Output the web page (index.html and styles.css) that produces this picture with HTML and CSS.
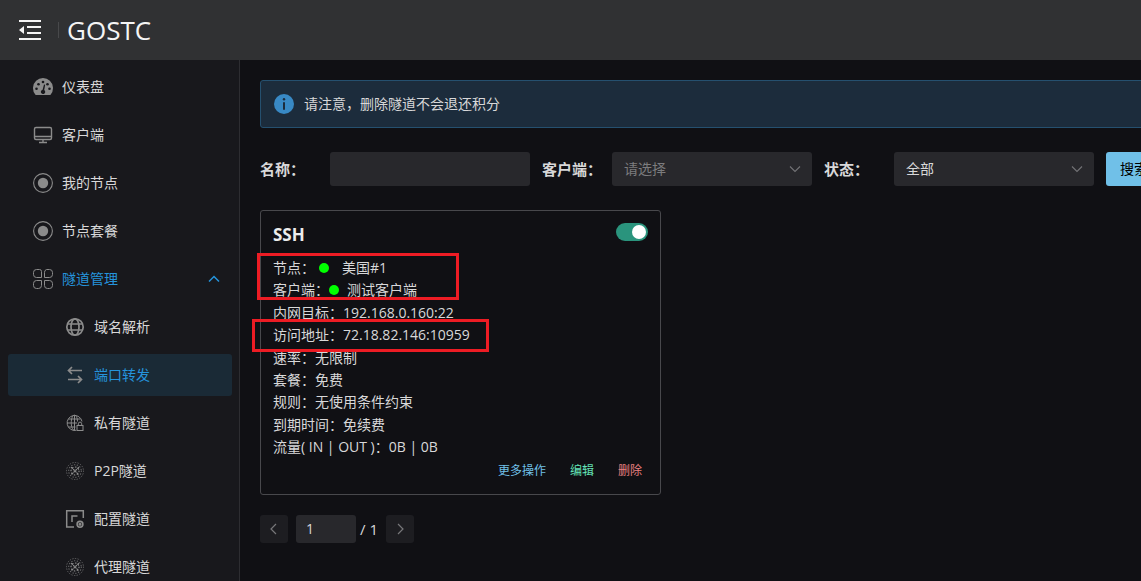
FILE: index.html
```html
<!DOCTYPE html>
<html lang="zh-CN">
<head>
<meta charset="utf-8">
<title>GOSTC</title>
<link rel="stylesheet" href="styles.css">
</head>
<body>
<svg class="defs" aria-hidden="true">
  <defs>
    <symbol id="node" viewBox="0 0 22 22"><circle cx="11" cy="11" r="9.4" fill="none" stroke="currentColor" stroke-width="1.1"/><circle cx="11" cy="11" r="5.2" fill="currentColor"/></symbol>
    <symbol id="mesh" viewBox="0 0 22 22">
      <g fill="none" stroke="currentColor" stroke-linecap="round">
        <circle cx="11" cy="11" r="8.5" stroke-width="1" stroke-dasharray="0.6 2.07" opacity=".6"/>
        <circle cx="11" cy="11" r="6.3" stroke-width="1.1" stroke-dasharray="0.5 2.33" opacity=".7"/>
        <circle cx="11" cy="11" r="4" stroke-width="1.2" stroke-dasharray="0.6 2.54"/>
        <path d="M7.500 7.500l7 7M14.500 7.500l-7 7" stroke-width="1.200" stroke-dasharray="1.200 1.500"/>
      </g>
    </symbol>
    <symbol id="down" viewBox="0 0 12 12"><path d="M1 3.5l5 5 5-5" fill="none" stroke="currentColor" stroke-width="1.1"/></symbol>
  </defs>
</svg>
<header class="topbar">
  <button class="collapse" aria-label="折叠菜单">
    <svg width="22" height="20" viewBox="0 0 22 20" fill="currentColor"><path d="M0 0h22v2H0zM8 6h14v2H8zM8 12h14v2H8zM0 18h22v2H0zM0 10l5-4v8z"/></svg>
  </button>
  <span class="divider"></span>
  <h1 class="brand">GOSTC</h1>
</header>
<div class="layout">
  <nav class="sidebar">
    <a class="item" href="#"><svg class="icon" viewBox="0 0 22 22"><path d="M3.3 18.5A10 10 0 1 1 18.7 18.5Q18.4 19 17.8 19H4.2Q3.600 19 3.300 18.500Z" fill="currentColor"/><g fill="#18181c"><circle cx="4.500" cy="12.800" r="1.300"/><circle cx="6.500" cy="8.200" r="1.300"/><circle cx="11" cy="6" r="1.300"/><circle cx="15.500" cy="8.200" r="1.300"/><circle cx="17.500" cy="12.800" r="1.300"/><path d="M12 8.500l1.200.3-1 5.200a2.200 2.200 0 1 1-1.600-.3z"/></g></svg>仪表盘</a>
    <a class="item" href="#"><svg class="icon" viewBox="0 0 22 22" fill="none" stroke="currentColor" stroke-width="1.400"><rect x="2.500" y="3.500" width="17" height="12" rx="1.500"/><path d="M2.500 12.500h17M11 15.500v3M7 18.500h8"/></svg>客户端</a>
    <a class="item" href="#"><svg class="icon"><use href="#node"/></svg>我的节点</a>
    <a class="item" href="#"><svg class="icon"><use href="#node"/></svg>节点套餐</a>
    <a class="item open" href="#"><svg class="icon" viewBox="0 0 22 22" fill="none" stroke="currentColor" stroke-width="1"><path d="M4.500 1.500h3a2 2 0 0 1 2 2v6h-5a3 3 0 0 1-3-3v-2a3 3 0 0 1 3-3zM14.500 1.500h3a3 3 0 0 1 3 3v2a3 3 0 0 1-3 3h-5v-5a3 3 0 0 1 2-3zM4.500 12.500h5v5a3 3 0 0 1-3 3h-2a3 3 0 0 1-3-3v-2a3 3 0 0 1 3-3zM12.500 12.500h5a3 3 0 0 1 3 3v2a3 3 0 0 1-3 3h-2a3 3 0 0 1-3-3z"/></svg>隧道管理<svg class="arrow" viewBox="0 0 12 12"><path d="M1 8.500l5-5 5 5" fill="none" stroke="currentColor" stroke-width="1.500"/></svg></a>
    <a class="item sub" href="#"><svg class="icon" viewBox="0 0 22 22" fill="none" stroke="currentColor" stroke-width="1.700"><circle cx="11" cy="11" r="8.200"/><ellipse cx="11" cy="11" rx="4" ry="8.200"/><path d="M3.500 8h15M3.500 14h15"/></svg>域名解析</a>
    <a class="item sub active" href="#"><svg class="icon" viewBox="0 0 22 22" fill="none" stroke="currentColor" stroke-width="1.700"><path d="M18 6.500H4.500M8 3L4.500 6.500 8 10M4 15.500h13.500M14 12l3.500 3.500-3.500 3.500"/></svg>端口转发</a>
    <a class="item sub" href="#"><svg class="icon" viewBox="0 0 22 22" fill="none" stroke="currentColor" stroke-width="1"><path d="M18 9.500A7.500 7.500 0 1 0 12 18.300M13.500 9.500C13.200 1 7.800 1 7.300 9.500c-.3 5 1.200 8.500 3.200 9M10.500 3.500v15M4.500 7h12M3 11h10M4.500 15h7"/><rect x="13" y="13.500" width="6" height="5"/><path d="M14.300 13.500v-1.700a1.700 1.700 0 0 1 3.400 0v1.700"/></svg>私有隧道</a>
    <a class="item sub" href="#"><svg class="icon"><use href="#mesh"/></svg>P2P隧道</a>
    <a class="item sub" href="#"><svg class="icon" viewBox="0 0 22 22" fill="none" stroke="currentColor" stroke-width="1.500"><path d="M10 19H2.700V2.700h16.600V10M8 14V8h5.500"/><circle cx="16" cy="16.300" r="2.900" stroke-width="1.600"/><circle cx="16" cy="16.300" r=".8"/></svg>配置隧道</a>
    <a class="item sub" href="#"><svg class="icon"><use href="#mesh"/></svg>代理隧道</a>
  </nav>
  <main class="main">
    <div class="content">
      <div class="alert" role="alert">
        <svg class="info" viewBox="0 0 20 20"><circle cx="10" cy="10" r="10" fill="#3889c5"/><g fill="#1c2c3c"><circle cx="10" cy="5.300" r="1.200"/><rect x="9" y="8" width="2" height="8" rx="1"/></g></svg>
        <span>请注意，删除隧道不会退还积分</span>
      </div>
      <form class="filters">
        <div class="field"><label for="name">名称：</label><input class="control" id="name" type="text"></div>
        <div class="field"><label for="client">客户端：</label><div class="picker"><select class="control empty" id="client"><option>请选择</option></select><svg class="caret"><use href="#down"/></svg></div></div>
        <div class="field"><label for="state">状态：</label><div class="picker"><select class="control" id="state"><option>全部</option></select><svg class="caret"><use href="#down"/></svg></div></div>
        <button class="search" type="button">搜索</button>
      </form>
      <article class="card">
        <div class="card-head"><h2>SSH</h2><input class="switch" type="checkbox" aria-label="启用" checked></div>
        <ul class="rows">
          <li class="node-row">节点：<i class="dot"></i>美国#1</li>
          <li class="client-row">客户端：<i class="dot"></i>测试客户端</li>
          <li>内网目标：192.168.0.160:22</li>
          <li>访问地址：72.18.82.146:10959</li>
          <li>速率：无限制</li>
          <li>套餐：免费</li>
          <li>规则：无使用条件约束</li>
          <li>到期时间：免续费</li>
          <li>流量( IN | OUT )：0B | 0B</li>
        </ul>
        <div class="actions"><button class="more">更多操作</button><button class="edit">编辑</button><button class="remove">删除</button></div>
        <span class="mark mark-nodes"></span>
        <span class="mark mark-address"></span>
      </article>
      <div class="pager">
        <button aria-label="上一页"><svg viewBox="0 0 12 12"><path d="M8 1L3 6l5 5"/></svg></button>
        <input type="text" value="1" aria-label="页码">
        <span>/ 1</span>
        <button aria-label="下一页"><svg viewBox="0 0 12 12"><path d="M4 1l5 5-5 5"/></svg></button>
      </div>
    </div>
  </main>
</div>
</body>
</html>
```
FILE: styles.css
```css
* { box-sizing: border-box; }
body {
  display: flex;
  flex-direction: column;
  height: 100vh;
  margin: 0;
  overflow: hidden;
  background: #101014;
  color: #d8d8d9;
  font: 14px/1.6 "Open Sans", "Noto Sans CJK SC", sans-serif;
}
button, input, select { font: inherit; color: inherit; border: 0; }
button { padding: 0; background: none; cursor: pointer; }
.defs { position: absolute; width: 0; height: 0; }

.topbar {
  display: flex;
  flex: none;
  align-items: center;
  height: 60px;
  padding-left: 19px;
  background: #303133;
  color: #f5f5f5;
}
.collapse { display: flex; }
.divider { width: 1px; height: 16px; margin: 0 8px 0 17px; background: #48494b; }
.brand { margin: 0; font-size: 26px; font-weight: 400; line-height: 36px; }

.layout { display: flex; flex: 1; min-height: 0; }
.sidebar {
  display: flex;
  flex: none;
  flex-direction: column;
  gap: 6px;
  width: 240px;
  padding: 6px 7px 6px 8px;
  overflow: hidden;
  background: #18181c;
  border-right: 1px solid #2d2d31;
}
.item {
  display: flex;
  flex: none;
  align-items: center;
  gap: 8px;
  height: 42px;
  padding: 0 12px 0 24px;
  border-radius: 3px;
  color: inherit;
  text-decoration: none;
}
.sub { padding-left: 56px; }
.icon { width: 22px; height: 22px; color: #8b8b8b; }
.open, .active { color: #2594dc; }
.active { background: #1a2a36; }
.arrow { width: 12px; height: 12px; margin-left: auto; }

.main { flex: 1; min-width: 0; padding: 20px; overflow: hidden; }
.content { min-width: 1000px; }
.alert {
  display: flex;
  align-items: center;
  gap: 10px;
  height: 48px;
  padding: 0 13px;
  background: #1c2c3c;
  border: 1px solid #25506f;
  border-radius: 3px;
}
.info { width: 20px; height: 20px; }
.filters { display: flex; gap: 12px; margin: 24px 0; }
.field { display: flex; align-items: center; }
.field label { width: 70px; font-size: 15px; font-weight: 700; }
.control {
  width: 200px;
  height: 34px;
  padding: 0 12px;
  background: #28282c;
  border-radius: 3px;
  appearance: none;
}
.empty { color: #7c7c7e; }
.picker { position: relative; display: flex; }
.caret {
  position: absolute;
  top: 11px;
  right: 11px;
  width: 12px;
  height: 12px;
  color: #737376;
  pointer-events: none;
}
.search { height: 34px; padding: 0 14px; background: #70c0e8; border-radius: 3px; color: #000; }

.card {
  position: relative;
  width: 401px;
  padding: 12px;
  border: 1px solid #48484c;
  border-radius: 3px;
}
.card-head { display: flex; align-items: flex-start; justify-content: space-between; }
.card-head h2 { margin: 0; color: #ececec; font-size: 17px; line-height: 24px; }
.switch {
  display: flex;
  align-items: center;
  justify-content: flex-end;
  width: 32px;
  height: 18px;
  margin: 0;
  padding: 2px;
  background: #2a947d;
  border-radius: 9px;
  appearance: none;
}
.switch::before { content: ""; width: 14px; height: 14px; background: #fff; border-radius: 50%; }
.rows { margin: 10px 0 1px; padding: 0; list-style: none; }
.rows li { white-space: nowrap; }
.dot { display: inline-block; width: 10px; height: 10px; background: #0f0; border-radius: 50%; }
.node-row .dot { margin: 0 13px 0 4px; }
.client-row .dot { margin-right: 8px; }
.actions { display: flex; justify-content: flex-end; gap: 24px; padding-right: 6px; font-size: 12px; line-height: 22px; }
.more { color: #70c0e8; }
.edit { color: #63e2b7; }
.remove { color: #e88080; }
.mark { position: absolute; border: 3px solid #ed1c24; pointer-events: none; }
.mark-nodes { top: 42px; left: -4px; width: 202px; height: 47px; }
.mark-address { top: 108px; left: -9px; width: 237px; height: 33px; }

.pager { display: flex; align-items: center; gap: 8px; margin-top: 20px; }
.pager button {
  display: grid;
  place-items: center;
  width: 28px;
  height: 28px;
  background: #1d1d21;
  border-radius: 3px;
}
.pager svg { width: 12px; height: 12px; fill: none; stroke: #77777a; stroke-width: 1.2; }
.pager input { width: 60px; height: 28px; padding: 0 10px; background: #28282c; border-radius: 3px; }
.pager span { margin-left: -4px; font-size: 15px; line-height: 24px; }
```
